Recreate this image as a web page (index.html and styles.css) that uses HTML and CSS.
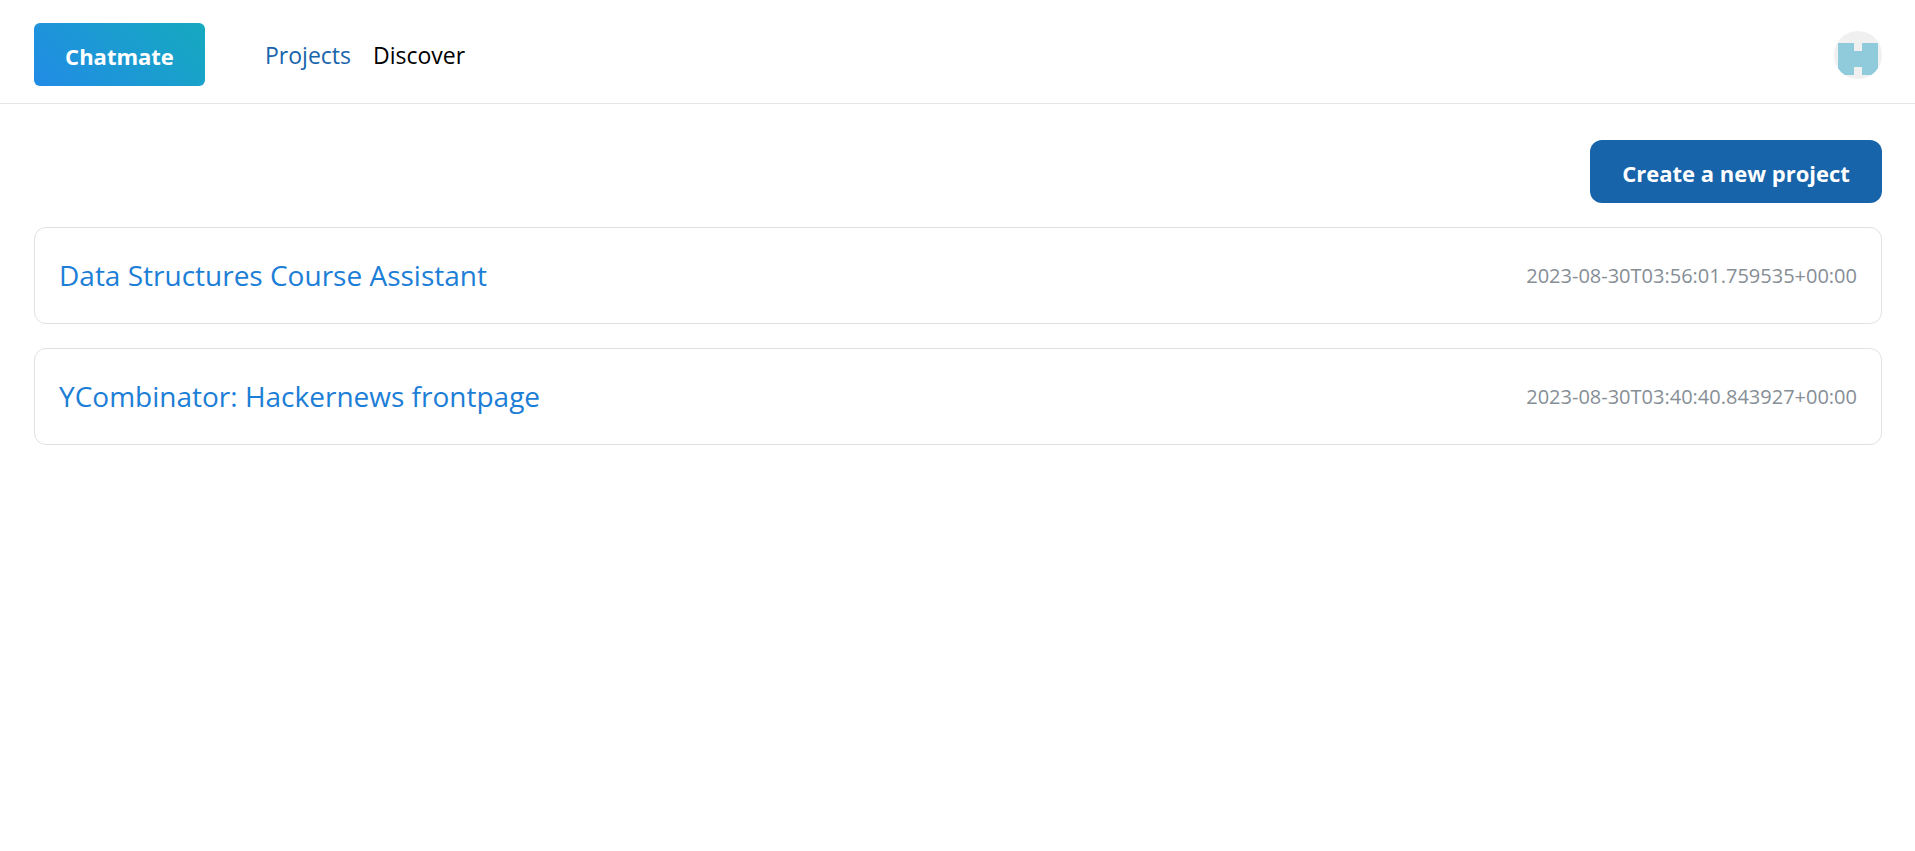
FILE: index.html
```html
<!DOCTYPE html>
<html lang="en">
<head>
    <meta charset="UTF-8">
    <meta name="viewport" content="width=device-width, initial-scale=1.0">
    <title>Chatmate</title>
    <link rel="stylesheet" href="styles.css">
</head>
<body>
    <header class="header">
        <button type="button" class="btn logo">Chatmate</button>
        <nav class="nav">
            <a href="#projects" class="active">Projects</a>
            <a href="#discover">Discover</a>
        </nav>
        <button type="button" class="avatar" aria-label="Account">
            <svg viewBox="0 0 48 48" shape-rendering="crispEdges" aria-hidden="true">
                <path fill="#8fcbdb" d="M4 12h16v8h8v-8h16v32H28v-8h-8v8H4z"/>
            </svg>
        </button>
    </header>

    <main class="content">
        <div class="toolbar">
            <button type="button" class="btn create">Create a new project</button>
        </div>

        <div class="card">
            <a href="#data-structures">Data Structures Course Assistant</a>
            <time>2023-08-30T03:56:01.759535+00:00</time>
        </div>
        <div class="card">
            <a href="#hackernews">YCombinator: Hackernews frontpage</a>
            <time>2023-08-30T03:40:40.843927+00:00</time>
        </div>
    </main>
</body>
</html>
```
FILE: styles.css
```css
:root {
    --blue: #1864ab;
    --link: #1c7ed6;
    --dimmed: #868e96;
    --border: #dee2e6;
}

* {
    box-sizing: border-box;
    margin: 0;
    padding: 0;
}

body {
    background: #fff;
    color: #000;
    font-family: 'Segoe UI', 'Open Sans', 'Noto Sans', sans-serif;
    font-size: 23px;
    line-height: 36px;
}

a {
    color: inherit;
    text-decoration: none;
}

button {
    border: none;
    cursor: pointer;
}

.header {
    display: flex;
    align-items: center;
    height: 104px;
    padding: 6px 33px 0 34px;
    border-bottom: 1px solid #e5e5e5;
}

.btn {
    height: 63px;
    padding-top: 2px;
    color: #fff;
    font-family: inherit;
    font-size: 22px;
    font-weight: 700;
}

.logo {
    width: 171px;
    border-radius: 6px;
    background: linear-gradient(45deg, #228be6, #15aabf);
}

.nav {
    display: flex;
    gap: 22px;
    margin-left: 60px;
}

.nav .active {
    color: var(--blue);
}

.avatar {
    width: 48px;
    height: 48px;
    margin-left: auto;
    border-radius: 50%;
    background: #f0f0f0;
    overflow: hidden;
}

.avatar svg {
    display: block;
    width: 100%;
}

.content {
    display: flex;
    flex-direction: column;
    gap: 24px;
    padding: 36px 33px 36px 34px;
}

.toolbar {
    display: flex;
    justify-content: flex-end;
}

.create {
    width: 292px;
    border-radius: 12px;
    background: var(--blue);
}

.card {
    display: flex;
    align-items: center;
    justify-content: space-between;
    gap: 24px;
    padding: 24px;
    border: 1px solid var(--border);
    border-radius: 12px;
}

.card a {
    color: var(--link);
    font-size: 28px;
    line-height: 47px;
}

.card time {
    color: var(--dimmed);
    font-size: 20px;
}
```
